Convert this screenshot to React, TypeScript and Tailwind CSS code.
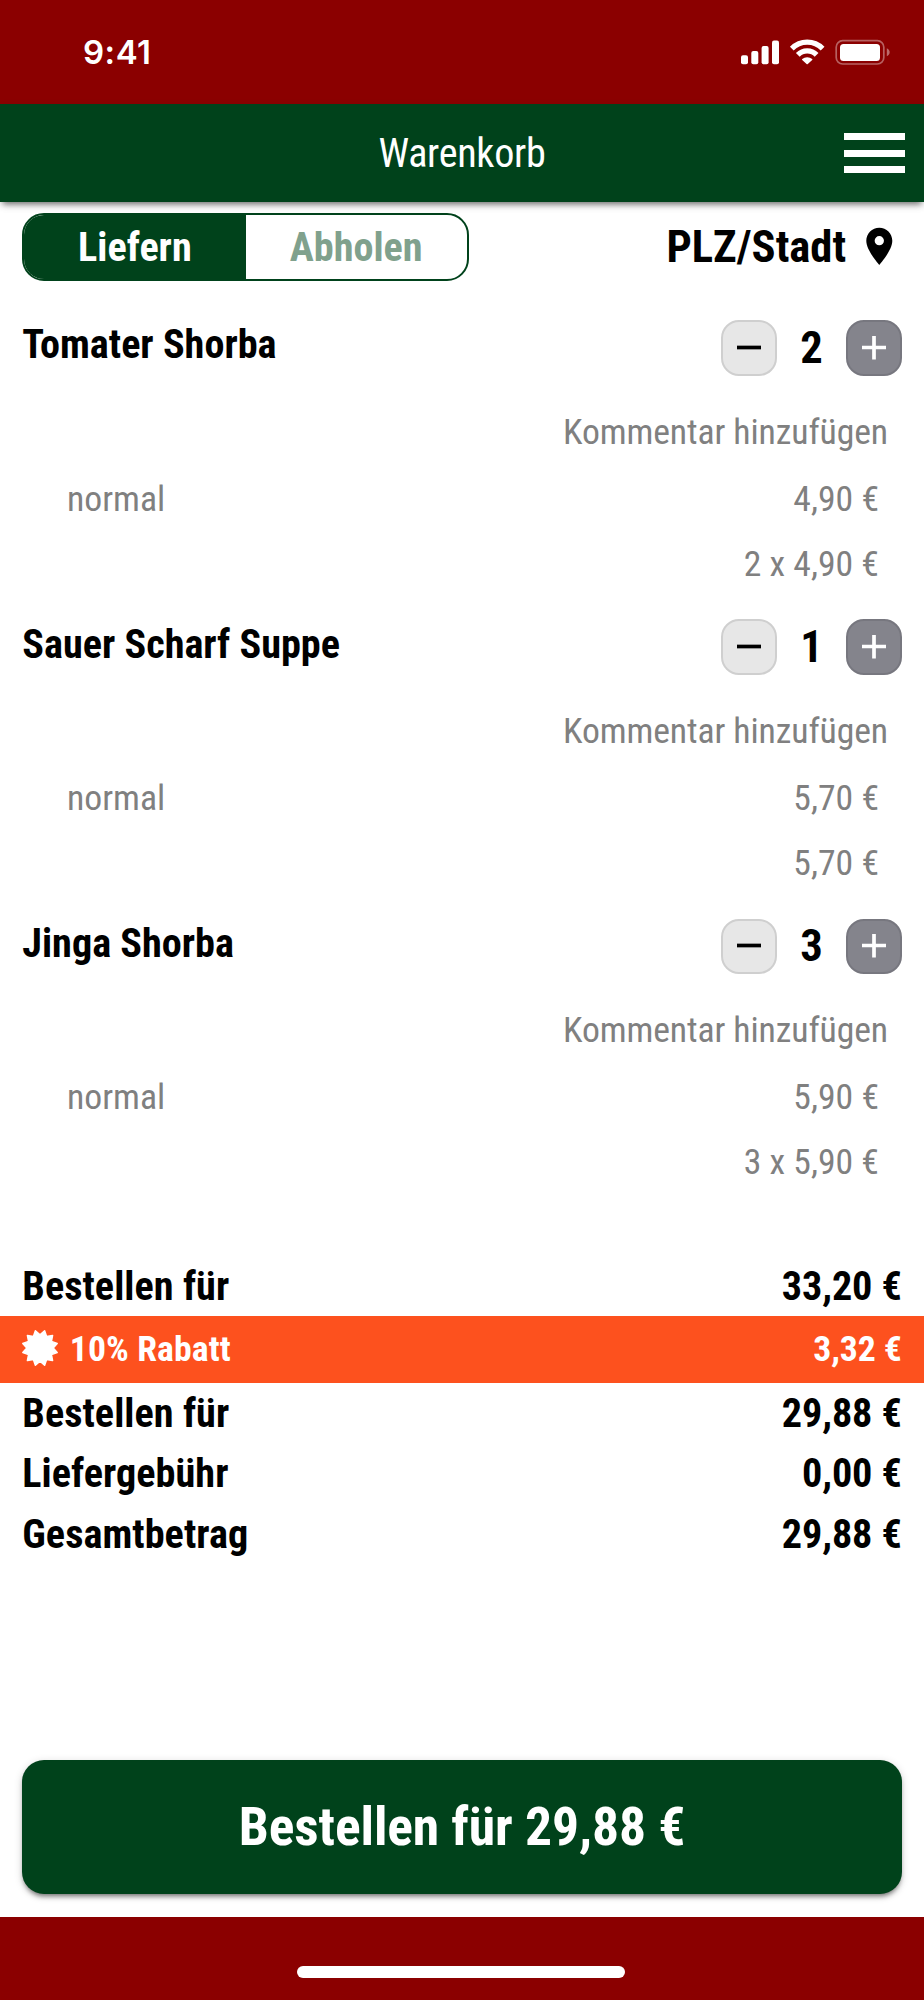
import { MdLocationOn } from 'react-icons/md'

type Item = { name: string; qty: number; unit: string; total: string }

const items: Item[] = [
  { name: 'Tomater Shorba', qty: 2, unit: '4,90 €', total: '2 x 4,90 €' },
  { name: 'Sauer Scharf Suppe', qty: 1, unit: '5,70 €', total: '5,70 €' },
  { name: 'Jinga Shorba', qty: 3, unit: '5,90 €', total: '3 x 5,90 €' },
]

// Twelve-pointed seal: alternating outer and inner vertices around the centre.
const sealPoints = Array.from({ length: 24 }, (_, i) => {
  const angle = (i * Math.PI) / 12
  const radius = i % 2 === 0 ? 13.2 : 17.8
  return `${(18 + radius * Math.sin(angle)).toFixed(2)},${(18 - radius * Math.cos(angle)).toFixed(2)}`
}).join(' ')

function StatusBar() {
  return (
    <div className="flex h-[104px] shrink-0 items-center justify-between bg-[#8b0000] pr-[32px] pl-[83px] text-white">
      <span className="font-['Inter',sans-serif] text-[33px] leading-none font-semibold tracking-[0.5px] [font-stretch:normal]">
        9:41
      </span>
      <svg width="152" height="34" viewBox="740 34 152 34" fill="white">
        <rect x="741" y="54.300" width="7" height="9" rx="2" />
        <rect x="751.3" y="50" width="7" height="13.300" rx="2" />
        <rect x="761.6" y="45" width="7" height="18.300" rx="2" />
        <rect x="772" y="39.500" width="7" height="23.800" rx="2" />
        <g fill="none" stroke="white" strokeWidth="5.3">
          <path d="M791.8 47.6a21.700 21.700 0 0 1 30.800 0" />
          <path d="M797.8 53.800a13.200 13.200 0 0 1 18.800 0" />
        </g>
        <path d="M802.2 58.100a7.400 7.400 0 0 1 10 0q.5.500 0 1l-4.400 3.900q-.6.500-1.200 0l-4.400-3.900q-.5-.5 0-1z" />
        <rect x="836.2" y="39.700" width="47.600" height="23.300" rx="6.500" fill="none" stroke="white" strokeOpacity=".38" strokeWidth="1.700" />
        <rect x="840" y="43" width="40" height="17" rx="3.500" />
        <path d="M886.800 47.300c3.800 1.500 3.800 6.500 0 8z" opacity=".42" />
      </svg>
    </div>
  )
}

function Header() {
  return (
    <header className="grid h-[98px] shrink-0 grid-cols-[1fr_auto_1fr] items-center bg-[#00421b] pr-[19px] pl-[19px] shadow-[0_5px_6px_-3px_rgba(0,0,0,0.5),0_3px_8px_rgba(0,0,0,0.14)]">
      <span />
      <h1 className="pt-[3px] text-[40.2px] leading-none tracking-[-0.3px] text-white">Warenkorb</h1>
      <button aria-label="Menü" className="flex w-[61px] flex-col gap-[9.5px] justify-self-end">
        <span className="h-[7px] bg-white" />
        <span className="h-[7px] bg-white" />
        <span className="h-[7px] bg-white" />
      </button>
    </header>
  )
}

function Toolbar() {
  return (
    <div className="mt-[11px] flex h-[68px] shrink-0 items-center justify-between px-[22.300px]">
      <div className="flex h-[67.500px] w-[446.500px] overflow-hidden rounded-[22px] border-2 border-[#00421b] text-[40.2px] leading-none font-bold">
        <button className="flex-1 bg-[#00421b] pt-[2px] text-white">Liefern</button>
        <button className="flex-1 pt-[2px] text-[#80a18d]">Abholen</button>
      </div>
      <button className="flex items-center gap-[11px] text-[44.6px] leading-none font-bold">
        PLZ/Stadt
        <MdLocationOn size={44.6} className="-mt-[1px]" />
      </button>
    </div>
  )
}

function CartItem({ item }: { item: Item }) {
  return (
    <section className="h-[299.200px] shrink-0 text-[35.7px] leading-none text-[#808080]">
      <div className="flex h-14 items-center justify-between px-[22.300px] font-bold text-black">
        <h2 className="-mt-[5px] text-[40.2px]">{item.name}</h2>
        <div className="flex items-center">
          <button className="flex size-[55.500px] items-center justify-center rounded-[18px] border-2 border-[#cfcfcf] bg-[#e7e7e7]">
            <svg width="24" height="24" viewBox="0 0 24 24" stroke="black" strokeWidth="3.700">
              <path d="M0 11.500h24" />
            </svg>
          </button>
          <span className="w-[69.500px] text-center text-[44.6px]">{item.qty}</span>
          <button className="flex size-[55.500px] items-center justify-center rounded-[18px] border-2 border-[#77777f] bg-[#84848c]">
            <svg width="24" height="24" viewBox="0 0 24 24" stroke="white" strokeWidth="3.700">
              <path d="M0 11.500h24M12 -.5v24" />
            </svg>
          </button>
        </div>
      </div>
      <div className="mt-[23px] flex h-[67px] items-center justify-end pr-[36px] tracking-[-0.11px]">
        Kommentar hinzufügen
      </div>
      <div className="flex h-[67px] items-center justify-between pr-[45px] pl-[67px]">
        <span>normal</span>
        <span>{item.unit}</span>
      </div>
      <div className="flex h-[63px] items-center justify-end pr-[45px]">{item.total}</div>
    </section>
  )
}

function Row({ label, value }: { label: string; value: string }) {
  return (
    <div className="flex h-[60.2px] items-center justify-between px-[22.300px] pt-[2px] text-[40.2px] leading-none font-bold">
      <span className="tracking-[0.05px]">{label}</span>
      <span className="tracking-[-0.1px]">{value}</span>
    </div>
  )
}

export default function App() {
  return (
    <div className="flex h-[2000px] w-[924px] flex-col bg-white font-['Roboto_Condensed','Roboto',sans-serif] text-black [font-stretch:75%]">
      <StatusBar />
      <Header />
      <Toolbar />
      <main className="mt-[39px] h-[936px] shrink-0">
        {items.map((item) => (
          <CartItem key={item.name} item={item} />
        ))}
      </main>
      <div className="shrink-0">
        <Row label="Bestellen für" value="33,20 €" />
        <div className="flex h-[67px] items-center bg-[#fd511e] px-[22.300px] text-[35.7px] leading-none font-bold text-white">
          <svg className="-mt-[3px]" width="36" height="36" viewBox="0 0 36 36" overflow="visible" fill="white" stroke="white" strokeWidth="1.500" strokeLinejoin="round">
            <polygon points={sealPoints} />
          </svg>
          <span className="ml-[11.500px] tracking-[0.1px]">10% Rabatt</span>
          <span className="ml-auto tracking-[-0.1px]">3,32 €</span>
        </div>
        <Row label="Bestellen für" value="29,88 €" />
        <Row label="Liefergebühr" value="0,00 €" />
        <Row label="Gesamtbetrag" value="29,88 €" />
      </div>
      <button className="mx-[22.300px] mt-auto mb-[22.400px] h-[134px] shrink-0 rounded-[22px] bg-[#00421b] text-[53.6px] leading-none font-bold tracking-[-0.1px] text-white shadow-[0_4px_5px_-2px_rgba(0,0,0,0.5),0_2px_9px_rgba(0,0,0,0.16)]">
        Bestellen für 29,88 €
      </button>
      <footer className="flex h-[83.500px] shrink-0 justify-center bg-[#8b0000] pt-[49.500px] pr-[2px]">
        <span className="h-[11.500px] w-[328px] rounded-full bg-white" />
      </footer>
    </div>
  )
}
